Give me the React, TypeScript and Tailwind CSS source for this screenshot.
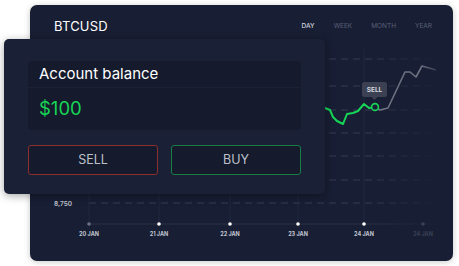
import { useState } from 'react';

const tabs = ['DAY', 'WEEK', 'MONTH', 'YEAR'];
const gridY = [59, 86, 110, 133, 156, 180, 203];
const days = [
    { x: 89, label: '20 JAN', dim: true },
    { x: 159, label: '21 JAN' },
    { x: 230, label: '22 JAN' },
    { x: 298, label: '23 JAN' },
    { x: 364, label: '24 JAN' },
    { x: 423, label: '24 JAN', faded: true },
];

const green = '325,108 330,110 333,117 337,121 343,124 347,114 353,113 358,111 364,104 369,108 375,107';
const gray = '375,107 380,110 388,108 405,72 410,72 416,77 422,66 429,68 436,70';

const Chart = () => (
    <svg width="423" height="212" viewBox="30 49 423 212" className="block">
        <defs>
            <linearGradient id="fadeX" gradientUnits="userSpaceOnUse" x1="89" x2="440" y1="0" y2="0">
                <stop offset="0" stopColor="#2a3148" />
                <stop offset="0.8" stopColor="#2a3148" />
                <stop offset="1" stopColor="#2a3148" stopOpacity="0" />
            </linearGradient>
            <linearGradient id="fadeGray" gradientUnits="userSpaceOnUse" x1="375" x2="440" y1="0" y2="0">
                <stop offset="0" stopColor="#6d7180" />
                <stop offset="0.7" stopColor="#6d7180" />
                <stop offset="1" stopColor="#6d7180" stopOpacity="0.2" />
            </linearGradient>
        </defs>

        {days.slice(0, 5).map(d => (
            <line key={d.x} x1={d.x} x2={d.x} y1={49} y2={224} stroke="#20263c" strokeWidth="1" />
        ))}

        {gridY.map(y => (
            <line key={y} x1={89} x2={440} y1={y} y2={y} stroke="url(#fadeX)" strokeWidth="1.3" strokeDasharray="7 5" />
        ))}

        <line x1={89} x2={440} y1={224} y2={224} stroke="url(#fadeX)" strokeWidth="1" />

        {days.map((d, i) => (
            <g key={i}>
                <circle cx={d.x} cy={224} r="1.8" fill={d.dim ? '#6a7088' : d.faded ? '#3a4058' : '#ffffff'} />
                <text
                    x={d.x}
                    y={236}
                    textAnchor="middle"
                    fontSize="5.5"
                    fontWeight="700"
                    fontFamily="Inter, sans-serif"
                    fill={d.faded ? '#3a4058' : '#c3c7d2'}
                >
                    {d.label}
                </text>
            </g>
        ))}

        <text x={54} y={205.5} fontSize="6.5" fontWeight="600" fontFamily="Inter, sans-serif" fill="#c0c3cc">
            8,750
        </text>

        <polyline points={gray} fill="none" stroke="url(#fadeGray)" strokeWidth="1.6" strokeLinejoin="round" />
        <polyline points={green} fill="none" stroke="#17d556" strokeWidth="2" strokeLinejoin="round" />
        <circle cx={375} cy={107} r="3.4" fill="#181e33" stroke="#17d556" strokeWidth="1.6" />

        <rect x={362} y={82} width={25} height={15} rx="2.5" fill="#3b4152" />
        <path d="M371.5 97 L374.5 100 L377.5 97 Z" fill="#3b4152" />
        <text x={374.5} y={92} textAnchor="middle" fontSize="6.5" fontWeight="700" fontFamily="Inter, sans-serif" fill="#d6d9e0">
            SELL
        </text>
    </svg>
);

const App = () => {
    const [tab, setTab] = useState('DAY');

    return (
        <div className="relative w-[459px] h-[266px] bg-white overflow-hidden" style={{ fontFamily: 'Inter, "Liberation Sans", sans-serif' }}>
            <div className="pl-[30px] pt-[5px]">
                <div className="w-[423px] h-[256px] rounded-[7px] bg-[#181e33] shadow-[0_1px_6px_rgba(0,0,0,0.22)] overflow-hidden">
                    <div className="h-[44px] flex items-center justify-between pl-[24px] pr-[21px]">
                        <span className="text-[13px] text-white tracking-[0.2px]">BTCUSD</span>
                        <div className="flex gap-[19px] text-[6.5px]">
                            {tabs.map(t => (
                                <span
                                    key={t}
                                    onClick={() => setTab(t)}
                                    className={`cursor-pointer ${tab === t ? 'text-[#d2d5de] font-medium' : 'text-[#596079]'}`}
                                >
                                    {t}
                                </span>
                            ))}
                        </div>
                    </div>
                    <Chart />
                </div>
            </div>

            <div className="absolute left-[4px] top-[39px] w-[321px] h-[155px] rounded-[5px] bg-[#1a2035] shadow-[0_2px_8px_rgba(0,0,0,0.35)] px-[24px] pt-[22px]">
                <div className="rounded-[4px] bg-[#151a2c] overflow-hidden">
                    <div className="h-[27px] flex items-center pl-[11px] border-b border-[#1b2134]">
                        <span className="text-[15px] text-white pt-[1px]">Account balance</span>
                    </div>
                    <div className="h-[42px] flex items-center pl-[11px]">
                        <span className="text-[18.5px] text-[#17d556]">$100</span>
                    </div>
                </div>
                <div className="mt-[15px] flex gap-[13px]">
                    <button className="w-[130px] h-[30px] rounded-[3px] border border-[#8c2f2c] bg-[#151a2c] text-[12.5px] text-[#bcc0ca]">
                        SELL
                    </button>
                    <button className="w-[130px] h-[30px] rounded-[3px] border border-[#1a7c45] bg-[#151a2c] text-[12.5px] text-[#bcc0ca]">
                        BUY
                    </button>
                </div>
            </div>
        </div>
    );
};

export default App;
